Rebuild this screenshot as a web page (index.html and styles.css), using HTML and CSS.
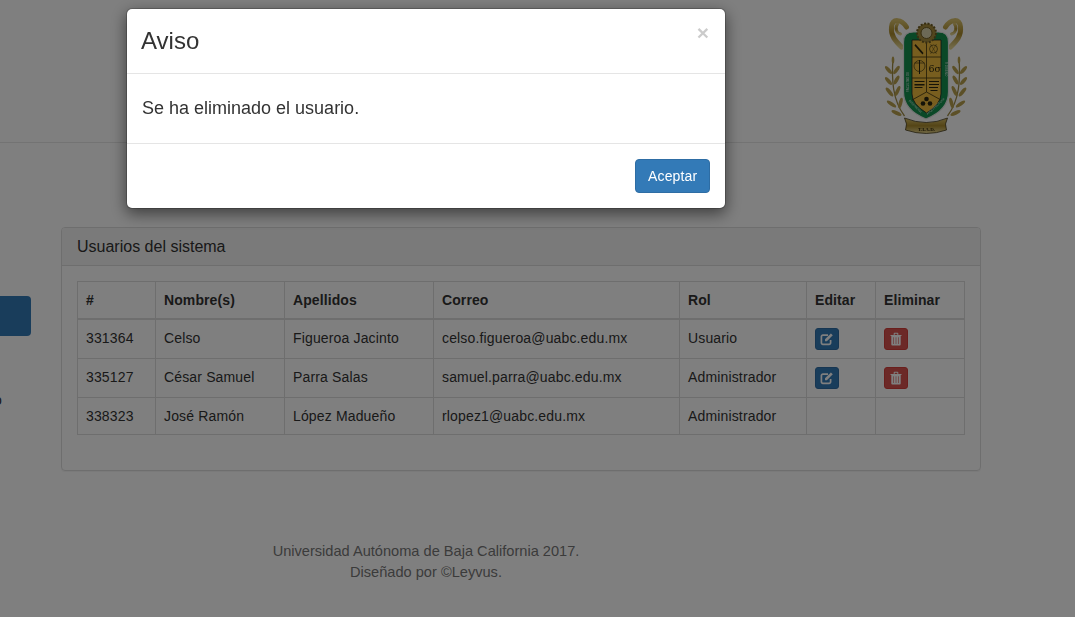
FILE: index.html
```html
<!DOCTYPE html>
<html lang="es">
<head>
<meta charset="utf-8">
<title>Usuarios del sistema</title>
<link rel="stylesheet" href="styles.css">
</head>
<body>
<header class="top">
  <svg class="crest" viewBox="0 0 130 150" width="130" height="150" aria-label="Escudo">
    <defs>
      <linearGradient id="gold" x1="0" y1="0" x2="0" y2="1">
        <stop offset="0" stop-color="#d8c06a"/>
        <stop offset=".5" stop-color="#a98a2c"/>
        <stop offset="1" stop-color="#e2d28e"/>
      </linearGradient>
    </defs>
    <g transform="translate(-.5 0)">
    <g fill="none" stroke="url(#gold)" stroke-linecap="round">
      <path d="M47 27 C42 19 33 18 32 27 C31 36 36 41 42 47" stroke-width="5"/>
      <path d="M38 24 C35 28 37 33 41 34" stroke-width="3"/>
      <path d="M86 27 C91 19 100 18 101 27 C102 36 97 41 91 47" stroke-width="5"/>
      <path d="M95 24 C98 28 96 33 92 34" stroke-width="3"/>
    </g>
    <g fill="none" stroke="#9d8a45" stroke-width="1.300">
      <path d="M33.500 58 C32 80 33 100 45 116"/>
      <path d="M99.500 58 C101 80 100 100 88 116"/>
    </g>
    <g fill="#b9a04e">
      <ellipse cx="33.500" cy="60" rx="1.300" ry="3.500"/>
      <ellipse cx="29" cy="70" rx="1.800" ry="5" transform="rotate(-40 29 70)"/>
      <ellipse cx="37" cy="70" rx="1.800" ry="5" transform="rotate(35 37 70)"/>
      <ellipse cx="29" cy="81" rx="1.800" ry="5" transform="rotate(-40 29 81)"/>
      <ellipse cx="37" cy="80" rx="1.800" ry="5" transform="rotate(30 37 80)"/>
      <ellipse cx="30" cy="92" rx="1.800" ry="5.500" transform="rotate(-40 30 92)"/>
      <ellipse cx="38" cy="91" rx="1.800" ry="5.500" transform="rotate(25 38 91)"/>
      <ellipse cx="32" cy="104" rx="1.800" ry="5.500" transform="rotate(-55 32 104)"/>
      <ellipse cx="41" cy="103" rx="1.800" ry="5.500" transform="rotate(15 41 103)"/>
      <ellipse cx="37" cy="113" rx="1.800" ry="5.500" transform="rotate(-65 37 113)"/>
      <ellipse cx="99.500" cy="60" rx="1.300" ry="3.500"/>
      <ellipse cx="104" cy="70" rx="1.800" ry="5" transform="rotate(40 104 70)"/>
      <ellipse cx="96" cy="70" rx="1.800" ry="5" transform="rotate(-35 96 70)"/>
      <ellipse cx="104" cy="81" rx="1.800" ry="5" transform="rotate(40 104 81)"/>
      <ellipse cx="96" cy="80" rx="1.800" ry="5" transform="rotate(-30 96 80)"/>
      <ellipse cx="103" cy="92" rx="1.800" ry="5.500" transform="rotate(40 103 92)"/>
      <ellipse cx="95" cy="91" rx="1.800" ry="5.500" transform="rotate(-25 95 91)"/>
      <ellipse cx="101" cy="104" rx="1.800" ry="5.500" transform="rotate(55 101 104)"/>
      <ellipse cx="92" cy="103" rx="1.800" ry="5.500" transform="rotate(-15 92 103)"/>
      <ellipse cx="96" cy="113" rx="1.800" ry="5.500" transform="rotate(65 96 113)"/>
    </g>
    <path d="M44 42 Q44 32 54 32 L79 32 Q89 32 89 42 L89 92 Q89 110 66.500 119 Q44 110 44 92 Z" fill="#14904f" stroke="#e8e8e8" stroke-width="1.200"/>
    <path d="M52.500 40 L81.500 40 L81.500 94 Q81.500 104 67 113 Q52.500 104 52.500 94 Z" fill="#f0bd3e" stroke="#222" stroke-width=".8"/>
    <g fill="none" stroke="#3d3210" stroke-width=".8">
      <path d="M67 40 V92"/>
      <path d="M52.500 57 H81.500"/>
      <path d="M52.500 78 H81.500"/>
      <path d="M52.500 100 L67 92 L81.500 100"/>
    </g>
    <g fill="#2b2610">
      <path d="M56 44 L64 53 L63 54.500 L55 45.500 Z"/>
      <circle cx="74" cy="49" r="4" fill="none" stroke="#2b2610" stroke-width=".6"/>
      <path d="M71 44 L77 54 M77 44 L71 54" stroke="#2b2610" stroke-width=".4"/>
      <circle cx="60" cy="66" r="5.500" fill="none" stroke="#2b2610" stroke-width=".6"/>
      <path d="M59.500 60 h1 v14 h-1 Z"/>
      <path d="M55 63 H65" stroke="#2b2610" stroke-width=".6"/>
      <rect x="55" y="81" width="10" height="1"/>
      <rect x="55" y="84" width="10" height="1.500"/>
      <rect x="55" y="87" width="8" height="1"/>
      <rect x="69.500" y="81" width="10" height="1"/>
      <rect x="69.500" y="84" width="10" height="1"/>
      <rect x="69.500" y="87" width="9" height="1"/>
      <rect x="71" y="90" width="7" height="1"/>
      <circle cx="67" cy="99" r="2.300"/>
      <circle cx="63.500" cy="103.500" r="2.300"/>
      <circle cx="70.500" cy="103.500" r="2.300"/>
    </g>
    <text class="crest-num" x="69" y="71.500">6σ</text>
    <text class="crest-rim" transform="translate(49.500 92) rotate(-90)">FACULTAD DE</text>
    <text class="crest-rim" transform="translate(85 62) rotate(90)">Y DISEÑO</text>
    <text class="crest-rim" transform="translate(49 101) rotate(45)">INGENIERÍA</text>
    <text class="crest-rim" transform="translate(68 115) rotate(-42)">ARQUITECTURA</text>
    <circle cx="67" cy="33" r="9.500" fill="#a68c3c" stroke="#6f5d25" stroke-width="2" stroke-dasharray="2 1.500"/>
    <circle cx="67" cy="33" r="5.500" fill="#d9d2ad" stroke="#6f5d25"/>
    <path d="M45 118 Q67 127 88 118 L86 124 L87 130 Q67 137 46 130 L47 124 Z" fill="url(#gold)" stroke="#2f260a" stroke-width=".7"/>
    <text class="crest-band" x="67" y="130.500">T.I.A.D.</text>
    </g>
  </svg>
</header>
<main class="content">
  <aside class="side">
    <div class="side-btn"></div>
    <p class="side-text">o</p>
  </aside>
  <section class="panel">
    <h3 class="panel-heading">Usuarios del sistema</h3>
    <div class="panel-body">
      <table class="users">
        <colgroup>
          <col class="c1"><col class="c2"><col class="c3"><col class="c4"><col class="c5"><col class="c6"><col class="c7">
        </colgroup>
        <thead>
          <tr><th>#</th><th>Nombre(s)</th><th>Apellidos</th><th>Correo</th><th>Rol</th><th>Editar</th><th>Eliminar</th></tr>
        </thead>
        <tbody>
          <tr>
            <td>331364</td><td>Celso</td><td>Figueroa Jacinto</td><td>celso.figueroa@uabc.edu.mx</td><td>Usuario</td>
            <td><span class="act act-edit"><svg class="ico" viewBox="0 0 14 14"><path d="M10.600 8V10.800A1.500 1.500 0 0 1 9.100 12.300H2.900A1.500 1.500 0 0 1 1.400 10.800V4.600A1.500 1.500 0 0 1 2.900 3.100H8" fill="none" stroke="#fff" stroke-width="1.700"/><path d="M5 7.300L10.900 1.400L12.800 3.300L6.900 9.200H5Z" fill="#fff"/></svg></span></td>
            <td><span class="act act-del"><svg class="ico" viewBox="0 0 14 14"><path d="M1.500 3H12.500V4.100H11.700V12.500A1 1 0 0 1 10.700 13.500H3.300A1 1 0 0 1 2.300 12.500V4.100H1.500ZM4.700 3V1.500A.8.8 0 0 1 5.500 .7H8.500A.8.8 0 0 1 9.300 1.500V3H8.300V1.700H5.700V3Z" fill="#fff"/><path d="M4.500 5.300V12M7 5.300V12M9.500 5.300V12" stroke="#d9534f" stroke-width=".6"/></svg></span></td>
          </tr>
          <tr>
            <td>335127</td><td>César Samuel</td><td>Parra Salas</td><td>samuel.parra@uabc.edu.mx</td><td>Administrador</td>
            <td><span class="act act-edit"><svg class="ico" viewBox="0 0 14 14"><path d="M10.600 8V10.800A1.500 1.500 0 0 1 9.100 12.300H2.900A1.500 1.500 0 0 1 1.400 10.800V4.600A1.500 1.500 0 0 1 2.900 3.100H8" fill="none" stroke="#fff" stroke-width="1.700"/><path d="M5 7.300L10.900 1.400L12.800 3.300L6.900 9.200H5Z" fill="#fff"/></svg></span></td>
            <td><span class="act act-del"><svg class="ico" viewBox="0 0 14 14"><path d="M1.500 3H12.500V4.100H11.700V12.500A1 1 0 0 1 10.700 13.500H3.300A1 1 0 0 1 2.300 12.500V4.100H1.500ZM4.700 3V1.500A.8.8 0 0 1 5.500 .7H8.500A.8.8 0 0 1 9.300 1.500V3H8.300V1.700H5.700V3Z" fill="#fff"/><path d="M4.500 5.300V12M7 5.300V12M9.500 5.300V12" stroke="#d9534f" stroke-width=".6"/></svg></span></td>
          </tr>
          <tr>
            <td>338323</td><td>José Ramón</td><td>López Madueño</td><td>rlopez1@uabc.edu.mx</td><td>Administrador</td><td></td><td></td>
          </tr>
        </tbody>
      </table>
    </div>
  </section>
</main>
<footer class="foot">
  <p>Universidad Autónoma de Baja California 2017.</p>
  <p>Diseñado por ©Leyvus.</p>
</footer>
<div class="backdrop"></div>
<div class="modal">
  <div class="modal-header">
    <span class="close">×</span>
    <h4 class="modal-title">Aviso</h4>
  </div>
  <div class="modal-body"><p>Se ha eliminado el usuario.</p></div>
  <div class="modal-footer"><button class="btn-primary" type="button">Aceptar</button></div>
</div>
</body>
</html>
```
FILE: styles.css
```css
* { box-sizing: border-box; }
html, body { height: 100%; }
body {
  margin: 0;
  overflow: hidden;
  background: #fff;
  color: #333;
  font: 14px/20px "Liberation Sans", Arial, sans-serif;
}
.top {
  height: 143px;
  border-bottom: 1px solid #e7e7e7;
  display: flex;
  justify-content: flex-end;
  padding-right: 85px;
}
.crest { display: block; filter: blur(.4px); }
.crest-num { font: 9.500px "DejaVu Serif", "Liberation Serif", serif; fill: #2b2610; }
.crest-rim { font: 3px "Liberation Sans", sans-serif; fill: #d8e6df; }
.crest-band { font: 700 5px "Liberation Serif", serif; fill: #2b2208; text-anchor: middle; }
.content {
  display: flex;
  padding-top: 84px;
}
.side { width: 31px; padding-top: 69px; overflow: hidden; flex: none; }
.side-btn { height: 40px; background: #337ab7; border-radius: 0 4px 4px 0; }
.side-text { margin: 54px 0 0 -6px; font-size: 14px; }
.panel {
  margin-left: 30px;
  width: 920px;
  border: 1px solid #ddd;
  border-radius: 4px;
  box-shadow: 0 1px 1px rgba(0,0,0,.05);
}
.panel-heading {
  margin: 0;
  padding: 10px 15px;
  background: #f5f5f5;
  border-bottom: 1px solid #ddd;
  border-radius: 3px 3px 0 0;
  font-size: 16px;
  font-weight: 400;
  line-height: 17px;
}
.panel-body { padding: 15px; }
.users {
  width: 887px;
  margin-bottom: 20px;
  table-layout: fixed;
  border-collapse: collapse;
}
.c1 { width: 78px; }
.c2 { width: 129px; }
.c3 { width: 149px; }
.c4 { width: 246px; }
.c5 { width: 127px; }
.c6 { width: 69px; }
.c7 { width: 89px; }
.users th, .users td {
  padding: 8px;
  border: 1px solid #ddd;
  text-align: left;
  vertical-align: top;
  letter-spacing: .15px;
}
.users th { border-bottom-width: 2px; font-weight: 700; letter-spacing: .1px; }
.act {
  display: flex;
  align-items: center;
  justify-content: center;
  width: 24px;
  height: 22px;
  border-radius: 3px;
}
.act-edit { background: #337ab7; border: 1px solid #2e6da4; }
.act-del { background: #d9534f; border: 1px solid #d43f3a; }
.ico { width: 14px; height: 14px; display: block; }
.foot {
  width: 852px;
  margin-top: 70px;
  text-align: center;
  color: #777;
  font-size: 14.6px;
  line-height: 21px;
}
.foot p { margin: 0; }
.backdrop {
  position: fixed;
  inset: 0;
  background: rgba(0,0,0,.5);
}
.modal {
  position: fixed;
  top: 8px;
  left: 126px;
  width: 600px;
  background: #fff;
  border: 1px solid rgba(0,0,0,.2);
  border-radius: 6px;
  background-clip: padding-box;
  box-shadow: 0 5px 15px rgba(0,0,0,.5);
}
.modal-header {
  height: 65px;
  padding: 15px;
  border-bottom: 1px solid #e5e5e5;
}
.modal-title {
  margin: 0 0 0 -1px;
  font-size: 24px;
  font-weight: 400;
  line-height: 34px;
}
.close {
  float: right;
  margin: -2px 1px 0 0;
  font-size: 21px;
  font-weight: 700;
  line-height: 21px;
  color: #000;
  opacity: .2;
  text-shadow: 0 1px 0 #fff;
}
.modal-body { height: 69px; padding: 21px 15px 15px; }
.modal-body p { margin: 0; font-size: 18px; line-height: 26px; }
.modal-footer {
  padding: 15px;
  border-top: 1px solid #e5e5e5;
  display: flex;
  justify-content: flex-end;
}
.btn-primary {
  height: 34px;
  width: 75px;
  padding: 6px 12px;
  color: #fff;
  background: #337ab7;
  border: 1px solid #2e6da4;
  border-radius: 4px;
  font: 14px/20px "Liberation Sans", Arial, sans-serif;
  letter-spacing: .15px;
}
```
